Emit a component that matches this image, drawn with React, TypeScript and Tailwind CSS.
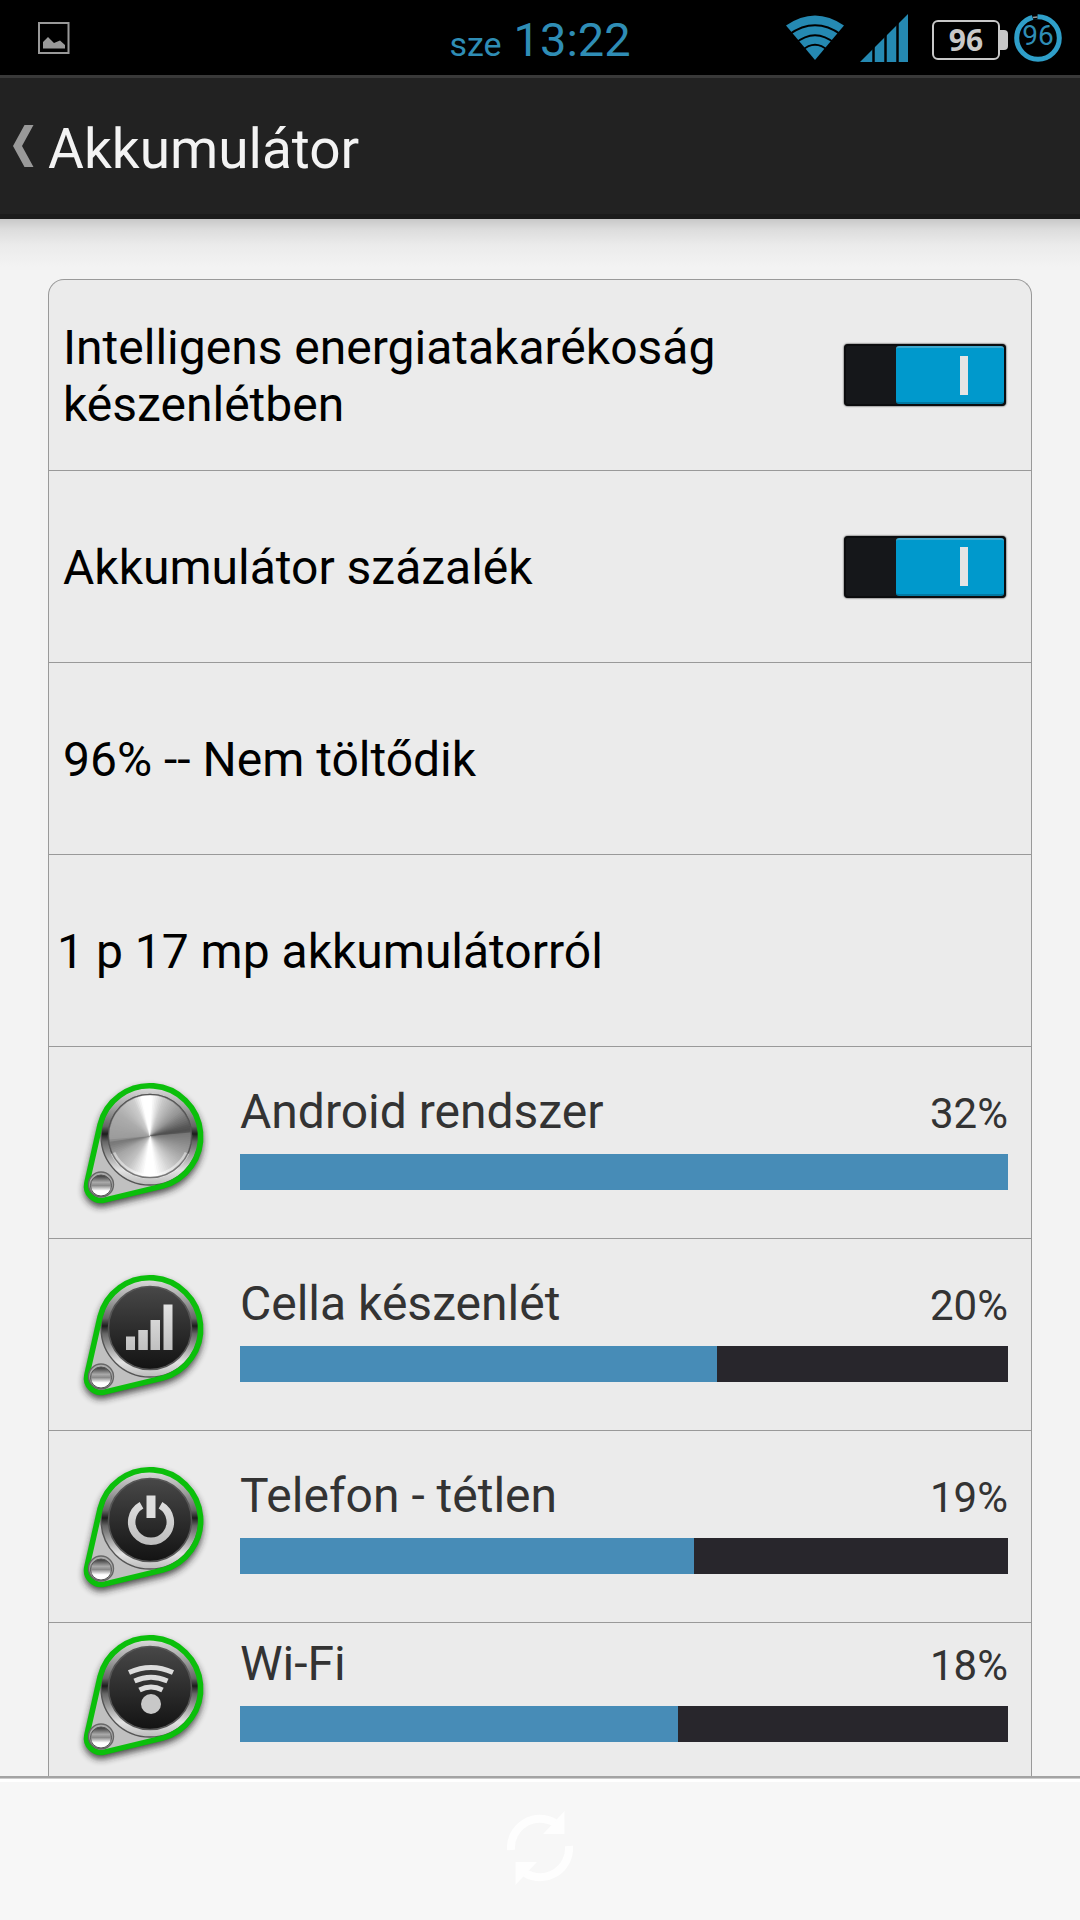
import { useState } from "react";
import type { ReactNode } from "react";

interface Usage {
  id: string;
  name: string;
  percent: number;
  share: number;
  icon: ReactNode;
}

// brightness of the brushed metal disc by angle, clockwise from the right
const metalStops: [number, number][] = [
  [-8, 78],
  [-4, 118],
  [30, 165],
  [60, 212],
  [82, 255],
  [98, 255],
  [125, 195],
  [150, 165],
  [170, 118],
  [176, 155],
  [215, 172],
  [245, 205],
  [258, 255],
  [272, 255],
  [290, 200],
  [320, 150],
  [345, 88],
  [352, 78],
];

function metalAt(deg: number) {
  for (let i = 1; i < metalStops.length; i++) {
    const [a0, v0] = metalStops[i - 1];
    const [a1, v1] = metalStops[i];
    if (deg >= a0 && deg <= a1) {
      return Math.round(v0 + ((v1 - v0) * (deg - a0)) / (a1 - a0));
    }
  }
  return 120;
}

function MetalDisc() {
  const r = 41;
  const wedges = Array.from({ length: 120 }, (_, i) => -8 + i * 3);
  return (
    <g>
      <circle cx="78" cy="65" r={r} fill="#aaa" />
      {wedges.map((deg, i) => {
        // each wedge runs under the next one so no seam shows between them
        const a = (deg * Math.PI) / 180;
        const b = ((deg + (i < 119 ? 8 : 3)) * Math.PI) / 180;
        const v = metalAt(deg + 1.5);
        return (
          <path
            key={deg}
            d={`M78 65L${78 + r * Math.cos(a)} ${65 + r * Math.sin(a)}A${r} ${r} 0 0 1 ${78 + r * Math.cos(b)} ${65 + r * Math.sin(b)}Z`}
            fill={`rgb(${v},${v},${v})`}
          />
        );
      })}
      <path d="M41 82A41 41 0 0 0 115 82" fill="none" stroke="#fff" strokeOpacity=".45" strokeWidth="5" />
      <circle cx="78" cy="65" r={r + 0.5} fill="none" stroke="#555" strokeOpacity=".6" strokeWidth="1.5" />
    </g>
  );
}

function Badge({ id, children }: { id: string; children?: ReactNode }) {
  const belt = "M14.9 111.8L28.1 53.6A51 51 0 1 1 90.4 115.1L32.4 129.1A14.5 14.5 0 0 1 14.9 111.8Z";
  return (
    <svg className="size-36 shrink-0" viewBox="0 0 144 144" aria-hidden="true">
      <defs>
        <linearGradient id={`${id}-plate`} x1="0" y1="0" x2="0" y2="1">
          <stop offset="0" stopColor="#dcdcdc" />
          <stop offset=".2" stopColor="#a5a5a5" />
          <stop offset=".4" stopColor="#666" />
          <stop offset=".48" stopColor="#1c1c1c" />
          <stop offset=".56" stopColor="#666" />
          <stop offset=".68" stopColor="#999" />
          <stop offset=".85" stopColor="#e2e2e2" />
          <stop offset="1" stopColor="#bbb" />
        </linearGradient>
        <linearGradient id={`${id}-face`} x1="0" y1="0" x2="0" y2="1">
          <stop offset="0" stopColor="#484848" />
          <stop offset="1" stopColor="#131313" />
        </linearGradient>
        <linearGradient id={`${id}-knob`} x1="0" y1="0" x2="0" y2="1">
          <stop offset="0" stopColor="#333" />
          <stop offset=".35" stopColor="#aaa" />
          <stop offset=".5" stopColor="#8a8a8a" />
          <stop offset=".75" stopColor="#fff" />
        </linearGradient>
        <linearGradient id={`${id}-glyph`} gradientUnits="userSpaceOnUse" x1="0" y1="40" x2="0" y2="92">
          <stop offset="0" stopColor="#e4e4e4" />
          <stop offset="1" stopColor="#bcbcbc" />
        </linearGradient>
        <filter id={`${id}-shadow`} x="-20%" y="-20%" width="140%" height="140%">
          <feGaussianBlur stdDeviation="3.5" />
        </filter>
      </defs>
      <path d={belt} transform="translate(0 4)" fill="#222" stroke="#222" strokeWidth="5" opacity=".8" filter={`url(#${id}-shadow)`} />
      <path d={belt} fill="#c0c0c0" />
      <circle cx="78" cy="65" r="49" fill={`url(#${id}-plate)`} stroke="#555" strokeWidth="1.4" />
      <path d={belt} fill="none" stroke="#0bbf0b" strokeWidth="5.6" />
      <circle cx="78" cy="65" r="41.5" fill={`url(#${id}-face)`} stroke="#555" strokeWidth="1.6" />
      {children ?? <MetalDisc />}
      <circle cx="29" cy="113.5" r="12.5" fill="#aaa" stroke="#666" strokeWidth="1.4" />
      <circle cx="29" cy="114.5" r="10.5" fill={`url(#${id}-knob)`} stroke="#555" />
    </svg>
  );
}

const usages: Usage[] = [
  { id: "system", name: "Android rendszer", percent: 32, share: 100, icon: <Badge id="system" /> },
  {
    id: "cell",
    name: "Cella készenlét",
    percent: 20,
    share: 62.1,
    icon: (
      <Badge id="cell">
        <g fill="url(#cell-glyph)">
          <rect x="54" y="73.5" width="9" height="13.5" />
          <rect x="66.3" y="67" width="9.5" height="20" />
          <rect x="78.5" y="57" width="9.5" height="30" />
          <rect x="91.5" y="41.5" width="9" height="45.5" />
        </g>
      </Badge>
    ),
  },
  {
    id: "idle",
    name: "Telefon - tétlen",
    percent: 19,
    share: 59.1,
    icon: (
      <Badge id="idle">
        <path d="M69.5 50.2A19.3 19.3 0 1 0 88.5 50.2" fill="none" stroke="url(#idle-glyph)" strokeWidth="7.5" />
        <path d="M79 40.5V63" fill="none" stroke="#dedede" strokeWidth="9" />
      </Badge>
    ),
  },
  {
    id: "wifi",
    name: "Wi-Fi",
    percent: 18,
    share: 57,
    icon: (
      <Badge id="wifi">
        <g fill="none" stroke="#dcdcdc" strokeWidth="5">
          <path d="M57 49.5Q79 39.5 101 49.5" />
          <path d="M62.5 58Q79 50.5 95.5 58" />
          <path d="M67.5 67Q79 61 90.5 67" />
        </g>
        <circle cx="79" cy="81" r="10" fill="#c8c8c8" />
      </Badge>
    ),
  },
];

function StatusBar() {
  return (
    <div className="grid h-[75px] grid-cols-[1fr_auto_1fr] items-center bg-black">
      <svg className="ml-[38px] size-8" viewBox="0 0 32 32" fill="none" aria-hidden="true">
        <rect x="1" y="1" width="29.5" height="30" stroke="#999" strokeWidth="2" />
        <path d="M5 26.5V20L10 15L16 21L22 18.5L27 23V26.5Z" fill="#999" />
      </svg>
      <div className="flex items-baseline gap-3 pt-1 text-[#2f8db5]">
        <span className="text-[34px] leading-none">sze</span>
        <span className="text-[47px] leading-none">13:22</span>
      </div>
      <div className="flex items-center justify-end pr-[18px]">
        <svg className="mr-[15px] h-12 w-[60px]" viewBox="0 0 60 48" aria-hidden="true">
          <path d="M1 11.5Q30 -8.5 59 11.5L30 46Z" fill="#2589b2" />
          <g fill="none" stroke="#000" strokeWidth="2">
            <path d="M4 20.5Q30 2 56 20.5" />
            <path d="M10 29.5Q30 13 50 29.5" />
            <path d="M17 36.5Q30 25 43 36.5" />
          </g>
        </svg>
        <svg className="mr-6 h-12 w-12" viewBox="0 0 48 48" aria-hidden="true">
          <path d="M0 48L48 0V48Z" fill="#2589b2" />
          <path d="M13.5 20V48M25.5 8V48M37.5 0V48" stroke="#000" strokeWidth="2.5" />
        </svg>
        <div className="mt-1 flex items-center">
          <span className="flex h-10 w-[68px] items-center justify-center rounded-md border-2 border-[#c8c8c8] font-['Open_Sans',sans-serif] text-[30px] leading-none font-bold text-[#c8c8c8]">
            96
          </span>
          <span className="h-5 w-2 rounded-r-sm bg-[#c8c8c8]" />
        </div>
        <div className="ml-[6px] grid size-12 place-items-center">
          <svg className="col-start-1 row-start-1 size-12" viewBox="0 0 48 48" fill="none" aria-hidden="true">
            <circle cx="24" cy="24" r="21.3" stroke="#2f9fc9" strokeWidth="5" />
            <path d="M18.5 3.2Q21 2.4 23.5 2.5" stroke="#000" strokeWidth="6" />
            <path d="M19 3.5L23.5 3" stroke="#999" strokeWidth="1.5" />
          </svg>
          <span className="col-start-1 row-start-1 pb-1 text-[28px] leading-none text-[#2f8db5]">96</span>
        </div>
      </div>
    </div>
  );
}

function Header() {
  return (
    <header className="flex h-36 items-center border-t-[3px] border-b-[5px] border-t-[#393939] border-b-[#1b1b1b] bg-[#222]">
      <button type="button" aria-label="Vissza" className="flex h-full w-12 cursor-pointer items-center pl-3">
        <svg className="h-11 w-[22px]" viewBox="0 0 22 44" aria-hidden="true">
          <path d="M12.5 1H21.5L10 22L21.5 43H12.5L1 22Z" fill="#999" />
        </svg>
      </button>
      <h1 className="pt-1.5 text-[55px] leading-none text-[#f3f3f3]">Akkumulátor</h1>
    </header>
  );
}

function SwitchRow({ label }: { label: string }) {
  const [on, setOn] = useState(true);

  return (
    <label className="flex h-48 cursor-pointer items-center justify-between border-b border-[#999] pr-[25px] pl-3.5 text-5xl leading-[57px] text-black first:h-[191px]">
      <span className="max-w-[700px] pt-0.5">{label}</span>
      <input type="checkbox" role="switch" checked={on} onChange={() => setOn(!on)} className="peer sr-only" />
      <span className="flex h-[62px] w-[162px] shrink-0 justify-start rounded-[4px] border-2 border-[#0b0c0e] bg-[#15171a] shadow-[0_0_2px_#000] peer-checked:justify-end">
        <span
          className={
            on
              ? "flex h-full w-[108px] items-center justify-center rounded-[3px] border-t-2 border-b-2 border-t-[#3fa9cf] border-b-[#0079a3] bg-[#0099cc] pl-7"
              : "flex h-full w-[108px] items-center justify-center rounded-[3px] bg-[#444]"
          }
        >
          <span className="h-[39px] w-2 bg-[#e4e4e4]" />
        </span>
      </span>
    </label>
  );
}

function UsageRow({ usage }: { usage: Usage }) {
  return (
    <li className="flex h-48 items-center gap-6 border-b border-[#999] px-[23px] last:h-36 last:border-b-0">
      {usage.icon}
      <div className="flex-1 pb-3">
        <div className="mb-3 flex items-baseline justify-between text-[#333]">
          <span className="text-5xl leading-[56px]">{usage.name}</span>
          <span className="text-[42px] leading-[56px]">{usage.percent}%</span>
        </div>
        <div className="h-9 bg-[#28262c]">
          <div className="h-full bg-[#478cb7]" style={{ width: `${usage.share}%` }} />
        </div>
      </div>
    </li>
  );
}

export default function App() {
  return (
    <div className="flex min-h-screen flex-col bg-[#f3f3f3] font-[Roboto,sans-serif]">
      <StatusBar />
      <Header />

      <main className="flex flex-1 flex-col bg-[linear-gradient(#c8c8c8,#dcdcdc_10px,#ebebeb_26px,#f3f3f3_48px)] px-12 pt-[60px]">
        <div className="flex-1 rounded-t-2xl border border-b-0 border-[#999] bg-[#ebebeb]">
          <SwitchRow label="Intelligens energiatakarékoság készenlétben" />
          <SwitchRow label="Akkumulátor százalék" />
          <p className="flex h-48 items-center border-b border-[#999] pt-0.5 pl-3.5 text-5xl text-black">96% -- Nem töltődik</p>
          <p className="flex h-48 items-center border-b border-[#999] pt-0.5 pl-2 text-5xl text-black">1 p 17 mp akkumulátorról</p>
          <ul>
            {usages.map((usage) => (
              <UsageRow key={usage.id} usage={usage} />
            ))}
          </ul>
        </div>
      </main>

      <footer className="flex h-36 items-center justify-center bg-[#f7f7f7] shadow-[inset_0_2px_#a3a3a3,inset_0_3px_#ccc,inset_0_6px_#fff]">
        <button type="button" aria-label="Frissítés" className="cursor-pointer text-[#fefefe]">
          <svg className="size-20" viewBox="-40 -40 80 80" aria-hidden="true">
            <path d="M-29 2A29 29 0 0 1 15 -25M29 -2A29 29 0 0 1 -15 25" fill="none" stroke="currentColor" strokeWidth="8" />
            <path d="M24.5 -37V-14H3ZM-24.5 37V14H-3Z" fill="currentColor" />
          </svg>
        </button>
      </footer>
    </div>
  );
}
